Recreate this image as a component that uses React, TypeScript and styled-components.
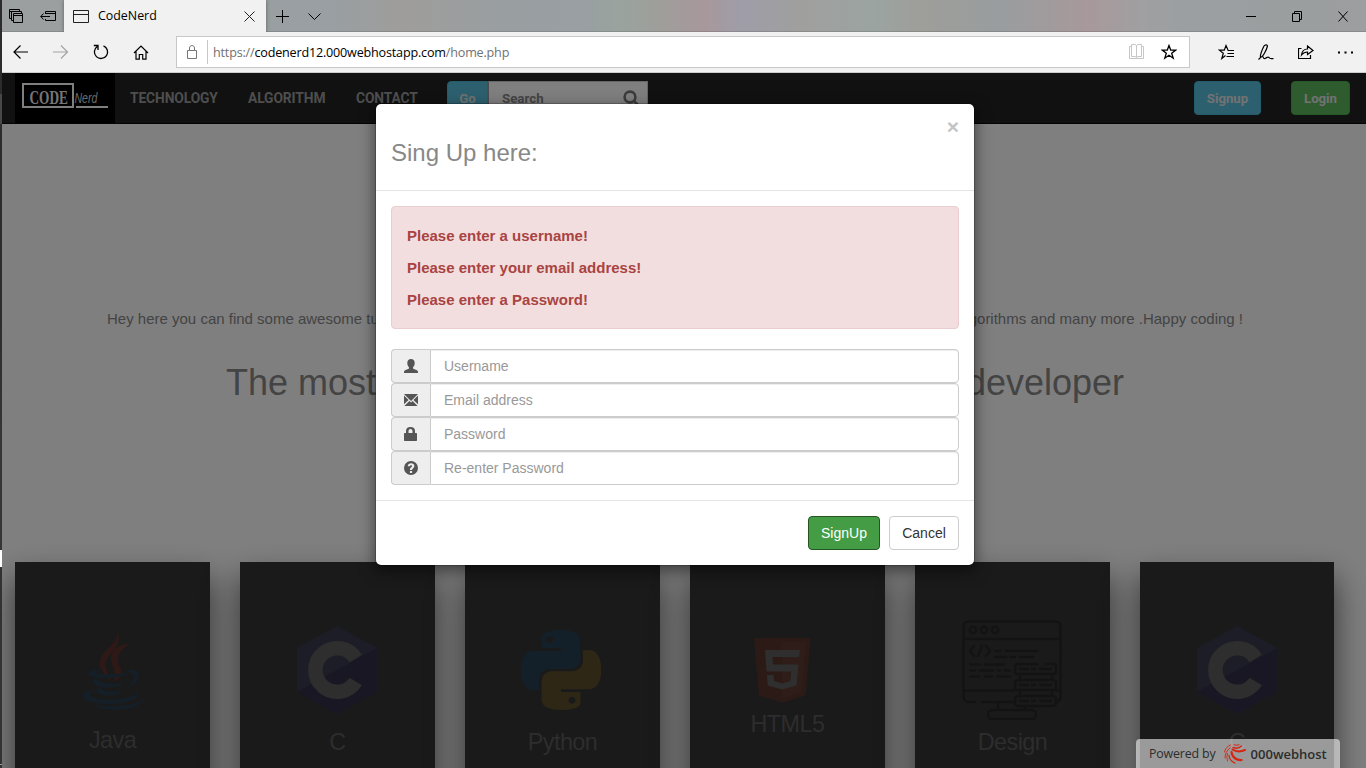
import React from "react";
import styled, { createGlobalStyle } from "styled-components";

const GlobalStyle = createGlobalStyle`
  * { box-sizing: border-box; }
  html, body { margin: 0; padding: 0; overflow: hidden; background: #fff; }
  body { font-family: "Liberation Sans", Arial, sans-serif; font-size: 14px; }
  svg { display: block; flex: none; }
`;

/* ---------- window ---------- */
const Screen = styled.div`
  display: flex;
  width: 1366px;
  height: 768px;
  overflow: hidden;
`;
const DesktopEdge = styled.div`
  width: 2px;
  flex: none;
  background: linear-gradient(
    #2c2c2c 0 94px, #484848 94px 124px, #2d2d2d 124px 330px, #353535 430px 550px,
    #fff 550px 567px, #323232 567px 764px, #999 764px 765px, #323232 765px
  );
`;
const BrowserWindow = styled.div`
  flex: 1;
  min-width: 0;
  display: flex;
  flex-direction: column;
`;
const TitleBar = styled.div`
  height: 32px;
  flex: none;
  display: flex;
  align-items: stretch;
  background: linear-gradient(
    to right,
    #9b9fa0 0px, #999fa2 330px, #9f9d9c 400px, #999fa1 500px, #999fa2 583px, #9aa39d 618px,
    #9f9e9b 660px, #a8989c 703px, #9e9da8 740px, #a09f9e 795px, #9ba4a1 870px,
    #9e9e9a 920px, #999d9f 1000px, #a8999b 1085px, #a09fa1 1140px, #9a9fa1 1190px, #9c9e9f 1364px
  );
  box-shadow: inset 0 -1px 0 rgba(0, 0, 0, 0.12);
`;
const Tab = styled.div`
  width: 202px;
  display: flex;
  align-items: center;
  padding: 0 11px 0 9px;
  background: #f1f1f1;
  box-shadow: 0 0 4px rgba(0, 0, 0, 0.4);
  clip-path: inset(0 -5px 0 -5px);
`;
const TabTitle = styled.span`
  flex: 1;
  margin-left: 9px;
  font: 12.4px/16px "Open Sans", sans-serif;
  color: #000;
`;
const TitleTools = styled.div<{ $width: number; $pad: number; $gap: number }>`
  width: ${(p) => p.$width}px;
  padding-left: ${(p) => p.$pad}px;
  display: flex;
  align-items: center;
  gap: ${(p) => p.$gap}px;
`;
const Spacer = styled.div`
  flex: 1;
`;
const ToolBar = styled.div`
  height: 41px;
  flex: none;
  display: flex;
  align-items: center;
  background: #f1f1f1;
  border-bottom: 1px solid #ccc;
`;
const NavTools = styled.div`
  width: 174px;
  padding-left: 11px;
  display: flex;
  align-items: center;
  gap: 24px;
`;
const AddressBar = styled.div`
  width: 1014px;
  height: 32px;
  display: flex;
  align-items: center;
  padding: 0 12px 0 10px;
  background: #fff;
  border: 1px solid #c8c8c8;
`;
const AddressDivider = styled.div`
  width: 1px;
  height: 24px;
  margin: 0 5px 0 10px;
  background: #c8c8c8;
`;
const Url = styled.span`
  flex: 1;
  padding-top: 2px;
  font: 12.6px/18px "Open Sans", sans-serif;
  letter-spacing: -0.19px;
  color: #717171;
  b { font-weight: 400; color: #000; }
`;
const AddressActions = styled.div`
  display: flex;
  gap: 16px;
`;
const BrowserTools = styled.div`
  display: flex;
  align-items: center;
  padding-left: 28px;
  gap: 24px;
`;

/* ---------- page ---------- */
const Page = styled.main`
  position: relative;
  flex: 1;
  min-height: 0;
  overflow: hidden;
  background: #fff;
`;
const Navbar = styled.nav`
  height: 51px;
  display: flex;
  align-items: flex-start;
  padding: 0 16px 0 13px;
  background: #222;
  border-bottom: 1px solid #080808;
  font-family: Roboto, sans-serif;
`;
const Brand = styled.div`
  width: 100px;
  height: 50px;
  background: #000;
`;
const NavLink = styled.a<{ $width: number }>`
  width: ${(p) => p.$width}px;
  padding-left: 15px;
  font-size: 13.8px;
  font-weight: 700;
  line-height: 50px;
  letter-spacing: -0.1px;
  white-space: nowrap;
  color: #9d9d9d;
`;
const SearchGroup = styled.div`
  width: 201px;
  height: 34px;
  margin: 8px 0 0 13px;
  display: flex;
`;
const NavButton = styled.button<{ $color: string; $border: string; $width: number }>`
  width: ${(p) => p.$width}px;
  height: 34px;
  margin: 8px 0 0;
  padding: 1px 0 0;
  border: 1px solid ${(p) => p.$border};
  border-radius: 4px;
  background: ${(p) => p.$color};
  color: #e4e4e4;
  font: 700 13.2px/20px Roboto, sans-serif;
  & + & { margin-left: 30px; }
`;
const GoButton = styled(NavButton)`
  margin: 0;
  border-radius: 4px 0 0 4px;
`;
const SearchField = styled.div`
  flex: 1;
  display: flex;
  align-items: center;
  justify-content: space-between;
  padding: 0 7px 0 13px;
  background: #fff;
  border: 1px solid #ccc;
  border-left-color: #999;
  color: #888;
  font-weight: 700;
  font-size: 13.3px;
`;
const Hero = styled.section`
  height: 438px;
  padding-top: 184px;
  color: #888;
`;
const SplitLine = styled.p<{ $size: number; $width: number; $left: number; $top: number }>`
  display: flex;
  justify-content: space-between;
  width: ${(p) => p.$width}px;
  margin: ${(p) => p.$top}px 0 0 ${(p) => p.$left}px;
  font-size: ${(p) => p.$size}px;
  line-height: 1.46;
  white-space: nowrap;
`;
const CardRow = styled.section`
  display: flex;
  gap: 30px;
  padding-left: 13px;
`;
const Card = styled.article`
  width: 195px;
  height: 300px;
  flex: none;
  display: flex;
  flex-direction: column;
  align-items: center;
  padding-top: 58px;
  background: #343434;
  box-shadow: 0 19px 38px rgba(0, 0, 0, 0.32), 0 15px 25px rgba(0, 0, 0, 0.36);
  &:last-child { width: 194px; }
`;
const CardArt = styled.div<{ $height: number; $top: number; $shift: number }>`
  height: ${(p) => p.$height}px;
  padding-top: ${(p) => p.$top}px;
  padding-right: ${(p) => p.$shift}px;
`;
const CardTitle = styled.h3`
  margin: 9px 0 0;
  font-size: 23.4px;
  line-height: 26px;
  font-weight: 400;
  letter-spacing: -0.55px;
  color: #5a5a5a;
`;
const Backdrop = styled.div`
  position: absolute;
  inset: 0;
  background: rgba(0, 0, 0, 0.5);
`;

/* ---------- modal ---------- */
const Modal = styled.div`
  position: absolute;
  left: 373px;
  top: 30px;
  width: 600px;
  background: #fff;
  background-clip: padding-box;
  border: 1px solid rgba(0, 0, 0, 0.2);
  border-radius: 6px;
  box-shadow: 0 5px 15px rgba(0, 0, 0, 0.5);
`;
const ModalHeader = styled.header`
  height: 87px;
  display: flex;
  justify-content: space-between;
  padding: 15px 15px 0;
  border-bottom: 1px solid #e5e5e5;
`;
const ModalTitle = styled.h4`
  margin: 18px 0 0;
  font-size: 24px;
  line-height: 32px;
  font-weight: 400;
  color: #888;
`;
const CloseButton = styled.button`
  height: 16px;
  margin-top: 0;
  padding: 0;
  border: 0;
  background: none;
  font: 700 21px/16px "Liberation Sans", Arial, sans-serif;
  color: #c4c4c4;
`;
const ModalBody = styled.div`
  padding: 15px;
`;
const Alert = styled.div`
  height: 123px;
  margin-bottom: 20px;
  padding: 18px 15px 0;
  border: 1px solid #ebccd1;
  border-radius: 4px;
  background: #f2dede;
  color: #a94442;
`;
const AlertLine = styled.p`
  margin: 0 0 10px;
  font-size: 15px;
  line-height: 22px;
  font-weight: 700;
`;
const InputGroup = styled.label`
  display: flex;
  height: 34px;
`;
const Addon = styled.span`
  width: 39px;
  display: flex;
  align-items: center;
  justify-content: center;
  background: #eee;
  border: 1px solid #ccc;
  border-right: 0;
  border-radius: 4px 0 0 4px;
  color: #555;
`;
const Input = styled.input`
  flex: 1;
  min-width: 0;
  height: 34px;
  padding: 6px 13px;
  border: 1px solid #ccc;
  border-radius: 0 4px 4px 0;
  box-shadow: inset 0 1px 1px rgba(0, 0, 0, 0.075);
  font: 14px/20px "Liberation Sans", Arial, sans-serif;
  &::placeholder { color: #999; opacity: 1; }
`;
const ModalFooter = styled.footer`
  display: flex;
  justify-content: flex-end;
  gap: 9px;
  padding: 15px;
  border-top: 1px solid #e5e5e5;
`;
const Button = styled.button<{ $primary?: boolean }>`
  width: ${(p) => (p.$primary ? 72 : 70)}px;
  height: 34px;
  padding: 0;
  border: 1px solid ${(p) => (p.$primary ? "#255625" : "#ccc")};
  border-radius: 4px;
  background: ${(p) => (p.$primary ? "#449d44" : "#fff")};
  color: ${(p) => (p.$primary ? "#fff" : "#333")};
  font: 14px/20px "Liberation Sans", Arial, sans-serif;
`;

/* ---------- hosting badge ---------- */
const HostBadge = styled.aside`
  position: absolute;
  right: 26px;
  bottom: 0;
  width: 204px;
  height: 29px;
  display: flex;
  align-items: center;
  padding-left: 13px;
  background: rgba(255, 255, 255, 0.56);
  border-radius: 4px 4px 0 0;
  font: 12.4px/18px "Open Sans", sans-serif;
  letter-spacing: -0.15px;
  color: #2c2c2c;
  svg { margin: 0 4px 0 7px; }
  strong { font-weight: 600; font-size: 13px; letter-spacing: 0; }
`;

/* ---------- icons ---------- */
type LineProps = { w: number; h: number; color?: string; sw?: number; children: React.ReactNode };
const Line = ({ w, h, color = "#000", sw = 1, children }: LineProps) => (
  <svg width={w} height={h} viewBox={`0 0 ${w} ${h}`} fill="none" stroke={color} strokeWidth={sw}>
    {children}
  </svg>
);

const BrandLogo = () => (
  <svg width="100" height="50" viewBox="0 0 100 50">
    <path d="M8 11H58V34H8Z" fill="none" stroke="#fff" strokeWidth="2" />
    <path d="M61 34H93" stroke="#fff" strokeWidth="2" />
    <text transform="translate(14.500 30.500) scale(0.700 1)" fontFamily="Liberation Serif, serif"
      fontWeight="700" fontSize="19" fill="#ececec">CODE</text>
    <text transform="translate(59.500 30) scale(0.680 1)" fontFamily="Liberation Sans, sans-serif"
      fontStyle="italic" fontSize="15.500" fill="#d5d5d5">Nerd</text>
  </svg>
);

const JavaArt = () => (
  <svg width="62" height="80" viewBox="0 0 62 80">
    <g fill="#5c322e">
      <path d="M35.300.5C38 14 17 21 17.500 34c.4 7 7 12 12.500 18C27 44 22.500 40 23.500 33 25 24 42 16 35.300.5Z" />
      <path d="M47.500 14C37 14 29 20 29 27c0 9 6 14 3 25 8-4 9-9 6.500-14C35 30 33 24 47.500 14Z" />
    </g>
    <g fill="#2a3e50" stroke="#2a3e50" strokeWidth="0.900">
      <path d="M19 40C2 41 2 47 20 47.500c12 .4 21-1 26-4.500-8 1.500-18 2-26 1.500-8-.5-9-2.500-1-4.500Z" />
      <path d="M14 49c-6 4 0 8 11 8 7 0 13-1 16-4-8 2.500-22 2-27-4Z" />
      <path d="M17 58c-6 3 0 7 9 7 6 0 11-1 14-4-8 2-19 1.500-23-3Z" />
      <path d="M48 40c10-1 13 10-2 17 8-7 9-13 0-15.500Z" />
      <path d="M11 61c-15 1-14 10 6 12 17 1.500 40-1 38-10-3 6-24 8-38 6.500C7 68 5 64 11 61Z" />
      <path d="M12 76c12 5 45 5 48.500-6C52 77 30 78 12 76Z" />
    </g>
  </svg>
);
const CArt = () => (
  <svg width="80" height="88" viewBox="0 0 80 88">
    <path d="M40 0 80 22V66L40 88 0 66V22Z" fill="#393b4d" />
    <path d="M80 22V66L40 88 0 66Z" fill="#312f46" />
    <path d="M58.700 32.500A21.800 21.800 0 1 0 58.700 55.500" fill="none" stroke="#5c5c5c" strokeWidth="14.500" />
  </svg>
);
const PythonArt = () => (
  <svg width="80" height="80" viewBox="0 0 24 24">
    <path fill="#284152" d="M14.25.18l.9.2.73.26.59.3.45.32.34.34.25.34.16.33.1.3.04.26.02.2-.01.13V8.5l-.05.63-.13.55-.21.46-.26.38-.3.31-.33.25-.35.19-.35.14-.33.1-.3.07-.26.04-.21.02H8.77l-.69.05-.59.14-.5.22-.41.27-.33.32-.27.35-.2.36-.15.37-.1.35-.07.32-.04.27-.02.21v3.06H3.17l-.21-.03-.28-.07-.32-.12-.35-.18-.36-.26-.36-.36-.35-.46-.32-.59-.28-.73-.21-.88-.14-1.05-.05-1.23.06-1.22.16-1.04.24-.87.32-.71.36-.57.4-.44.42-.33.42-.24.4-.16.36-.1.32-.05.24-.01h.16l.06.01h8.16v-.83H6.18l-.01-2.75-.02-.37.05-.34.11-.31.17-.28.25-.26.31-.23.38-.2.44-.18.51-.15.58-.12.64-.1.71-.06.77-.04.84-.02 1.27.05zm-6.3 1.98l-.23.33-.08.41.08.41.23.34.33.22.41.09.41-.09.33-.22.23-.34.08-.41-.08-.41-.23-.33-.33-.22-.41-.09-.41.09z" />
    <path fill="#5c4f2d" d="M21.04 6.11l.28.06.32.12.35.18.36.27.36.35.35.47.32.59.28.73.21.88.14 1.04.05 1.23-.06 1.23-.16 1.04-.24.86-.32.71-.36.57-.4.45-.42.33-.42.24-.4.16-.36.09-.32.05-.24.02-.16-.01h-8.22v.82h5.840l.01 2.760.02.36-.05.34-.11.31-.17.29-.25.25-.31.24-.38.2-.44.17-.51.15-.58.13-.64.09-.71.07-.77.04-.84.01-1.270-.04-1.070-.14-.9-.2-.73-.25-.59-.3-.45-.33-.34-.34-.25-.34-.16-.33-.1-.3-.04-.25-.02-.2.01-.13v-5.340l.05-.64.13-.54.21-.46.26-.38.3-.32.33-.24.35-.2.35-.14.33-.1.3-.06.26-.04.21-.02.13-.01h5.840l.69-.05.59-.14.5-.21.41-.28.33-.32.27-.35.2-.36.15-.36.1-.35.07-.32.04-.28.02-.21V6.070h2.090zm-6.470 14.250l-.23.33-.08.41.08.41.23.33.33.23.41.08.41-.08.33-.23.23-.33.08-.41-.08-.41-.23-.33-.33-.23-.41-.08-.41.08z" />
  </svg>
);
const HtmlArt = () => (
  <svg width="57" height="65" viewBox="0 0 57 65">
    <path d="M0 0H56.500L51.500 57.500 28.300 64.500 5 57.500Z" fill="#59352d" />
    <path d="M28.300 4H52L47.500 54.500 28.300 60Z" fill="#5d3a30" />
    <path d="M11 12H46L45 19H18.500L19 26.500H44.500L42.500 47.500 28.300 51.500 13.800 47.500 13 37H19.500L20 43 28.200 45.500 36.500 43 37.200 33.500H12.500Z" fill="#5e5e5e" />
  </svg>
);
const DesignArt = () => (
  <svg width="100" height="100" viewBox="0 0 100 100" fill="none" stroke="#272727" strokeWidth="2.500" strokeLinecap="round">
    <path d="M13 82H7Q1.500 82 1.500 76V7Q1.500 1.500 7 1.500H93Q98.500 1.500 98.500 7V76Q98.500 82 94 82M20 82H52M2 19H98M2 70.500H52M94 70.500H98M36 83V89M63 87V89" />
    <circle cx="11" cy="10" r="3.200" /><circle cx="22" cy="10" r="3.200" /><circle cx="33" cy="10" r="3.200" />
    <path d="M12 26 8 31 12 36M24 26 28 31 24 36M20 26 16 36" />
    <path d="M33 31H38M44 31H75M33 37H44M49 37H53M58 37H71M8 44.500H18M23 44.500H42M8 50.500H13M18 50.500H31M36 50.500H38M43 50.500H48M8 56.500H17M23 56.500H30M35 56.500H48" />
    <path d="M75 44H56Q53 44 53 47V51Q53 54 56 54H91Q94 54 94 51V47Q94 44 91 44H84" />
    <rect x="53" y="60" width="41" height="10" rx="3" /><rect x="53" y="76" width="41" height="10" rx="3" />
    <path d="M58 55V59M90 55V59M58 71V75M90 71V75M58 49H66M70 49H73M78 49H89M58 65H66M70 65H73M78 65H89M58 81H66M70 81H73M78 81H89" />
    <rect x="26" y="90" width="48" height="9" rx="4" />
  </svg>
);
const HostMark = () => (
  <svg width="24" height="20" viewBox="0 0 24 20" fill="none" stroke="#d9230f" strokeLinecap="round">
    <path d="M9.500 5.500Q15 9 22 6" strokeWidth="2" />
    <path d="M8.500 8C9 13.500 14 16.500 18.500 16" strokeWidth="2.200" />
    <path d="M6 11.500Q6.500 17 12 19" strokeWidth="1.300" />
    <path d="M10 3.500Q15 5.500 18.500 2" strokeWidth="1.500" />
    <path d="M7.500 1Q2.500 3 1.500 8" strokeWidth="0.900" />
    <path d="M7 4Q2 7.500 2 14" strokeWidth="0.900" />
    <path d="M11 .8Q14 2 16 .8" strokeWidth="1" />
    <path d="M4.500 9.500Q3 13 4.500 17" strokeWidth="0.900" />
  </svg>
);

const fieldIcons = {
  user: <path d="M7 0C9.200 0 10.700 1.500 10.700 4 10.700 6 9.900 7.300 9 8.400V9.600C11 10.600 13 11.200 13.700 12 14 12.500 14 13 14 14H0C0 13 0 12.500.3 12 1 11.200 3 10.600 5 9.600V8.400C4.100 7.300 3.300 6 3.300 4 3.300 1.500 4.800 0 7 0Z" />,
  mail: <path d="M0 1H14L7 8ZM0 2.500 4.600 7 0 11.300ZM14 2.500V11.300L9.400 7ZM5.400 7.900 7 9.400 8.600 7.900 13.600 13H.4Z" />,
  lock: <path d="M2 6V4C2 1.500 3.500 0 6.500 0S11 1.500 11 4V6H12.300Q13 6 13 6.700V13.300Q13 14 12.300 14H.7Q0 14 0 13.300V6.700Q0 6 .7 6ZM4.500 6H8.500V4Q8.500 2 6.500 2T4.500 4Z" />,
  question: <path d="M7 0a7 7 0 1 1 0 14A7 7 0 0 1 7 0ZM5.900 9.900V12H8.100V9.900ZM3.700 5.300H5.900C5.900 3.800 8.100 3.800 8.100 5 8.100 6.200 5.900 6.300 5.900 9H8.100C8.100 7.500 10.400 7 10.400 5 10.400 1.200 3.700 1.200 3.700 5.300Z" />,
};
const FieldIcon = ({ name }: { name: keyof typeof fieldIcons }) => (
  <svg width="14" height="14" viewBox="0 0 14 14" fill="currentColor" fillRule="evenodd">{fieldIcons[name]}</svg>
);

const fields: { icon: keyof typeof fieldIcons; label: string; type: string }[] = [
  { icon: "user", label: "Username", type: "text" },
  { icon: "mail", label: "Email address", type: "email" },
  { icon: "lock", label: "Password", type: "password" },
  { icon: "question", label: "Re-enter Password", type: "password" },
];
const cards = [
  { title: "Java", art: <JavaArt />, height: 98, top: 10, shift: 0 },
  { title: "C", art: <CArt />, height: 100, top: 6, shift: 1 },
  { title: "Python", art: <PythonArt />, height: 100, top: 10, shift: 3 },
  { title: "HTML5", art: <HtmlArt />, height: 82, top: 18, shift: 11 },
  { title: "Design", art: <DesignArt />, height: 100, top: 0, shift: 1 },
  { title: "C", art: <CArt />, height: 100, top: 6, shift: 0 },
];

const Chrome = () => (
  <>
    <TitleBar>
      <TitleTools $width={62} $pad={7} $gap={17}>
        <Line w={14} h={14}><path d="M2.500 9.500H.5V.5H10.500V2.500M.5 2.500H10M4.500 11.500H2.500V2.500H12.500V4.500M4.500 4.500H13.500V13.500H4.500ZM4.500 6.500H13.500" /></Line>
        <Line w={16} h={12}><path d="M5.500 4V1.500H15.500V10.500H5.500V9M5.500 3.500H15.500M.8 6.500H10M3.500 3.500.8 6.500 3.500 9.500" /></Line>
      </TitleTools>
      <Tab>
        <Line w={16} h={13} color="#222"><path d="M.5.5H15.500V12.500H.5ZM.5 4.500H15.500" /></Line>
        <TabTitle>CodeNerd</TabTitle>
        <Line w={11} h={11} color="#222"><path d="M.5.5 10.500 10.500M10.500.5.5 10.500" /></Line>
      </Tab>
      <TitleTools $width={80} $pad={10} $gap={19}>
        <Line w={13} h={13}><path d="M6.500 0V13M0 6.500H13" /></Line>
        <Line w={13} h={7}><path d="M.5.5 6.500 6.500 12.500.5" /></Line>
      </TitleTools>
      <Spacer />
      <TitleTools $width={120} $pad={0} $gap={36}>
        <Line w={10} h={11}><path d="M0 5.500H10" /></Line>
        <Line w={10} h={11}><path d="M.5 2.500H7.500V10.500H.5ZM2.500 2.500V.5H9.500V8.500H7.500" /></Line>
        <Line w={10} h={11}><path d="M.5.5 9.500 10.500M9.500.5.5 10.500" /></Line>
      </TitleTools>
    </TitleBar>
    <ToolBar>
      <NavTools>
        <Line w={16} h={14} sw={1.200}><path d="M1 7H15M7.500.5 1 7 7.500 13.500" /></Line>
        <Line w={16} h={14} color="#a3a3a3" sw={1.200}><path d="M0 7H14.500M8 .5 14.500 7 8 13.500" /></Line>
        <Line w={16} h={16} sw={1.300}><path d="M10.500 1.800A6.600 6.600 0 1 1 4.200 2.500M5 6V1.500H.8" /></Line>
        <Line w={16} h={15} sw={1.200}><path d="M1 8 8 1 15 8M3 6.500V14.200H6.300V9.500H9.700V14.200H13V6.500" /></Line>
      </NavTools>
      <AddressBar>
        <Line w={10} h={14} color="#777"><path d="M.5 5.500H9.500V13.500H.5ZM2.500 5V3C2.500-.2 7.500-.2 7.500 3V5" /></Line>
        <AddressDivider />
        <Url>https://<b>codenerd12.000webhostapp.com</b>/home.php</Url>
        <AddressActions>
          <Line w={16} h={15} color="#c6c6c6"><path d="M2.500 12.500V.5H6L7.500 1.500 9 .5H12.500V12.500H9L7.500 13.500 6 12.500ZM7.500 1.500V13M2 2.500H.5V14.500H14.500V2.500H13" /></Line>
          <Line w={16} h={16} sw={1.300}><path d="M8 1.500 9.700 6.100H14.700L10.700 9.200 12.200 14.200 8 11.200 3.800 14.200 5.300 9.200 1.300 6.100H6.300Z" /></Line>
        </AddressActions>
      </AddressBar>
      <BrowserTools>
        <Line w={16} h={16} sw={1.200}><path d="M10 6 8 1.500 6.300 6.100H1.300L5.300 9.200 3.800 14.500 7.500 11.500M9.500 6.500H16M9.500 9.500H16M8.500 12.500H16" /></Line>
        <Line w={16} h={16} sw={1.200}><path d="M.5 15.500 2.500 13.500C5 13 8.500 6 9.500 2 9.300.3 7 .5 6 2 4 6 2 11 2.500 13.500M4.500 12C6 14 5 15 7 14.500 9 14 9.500 12 11 13.500 12 15.200 13.500 14.800 15.500 14.500" /></Line>
        <Line w={16} h={14} sw={1.200}><path d="M3.500 3.500H.5V13.500H12.500V10M3.500 10C4 6 6 4 9.500 4V1L15 5.500 9.500 9.500V7C7 7 5 8 3.500 10Z" /></Line>
        <Line w={15} h={3}><path d="M0 1.500H2M6.500 1.500H8.500M13 1.500H15" strokeWidth="2" /></Line>
      </BrowserTools>
    </ToolBar>
  </>
);

const SignUpModal = () => (
  <Modal role="dialog">
    <ModalHeader>
      <ModalTitle>Sing Up here:</ModalTitle>
      <CloseButton aria-label="Close">×</CloseButton>
    </ModalHeader>
    <ModalBody>
      <Alert>
        <AlertLine>Please enter a username!</AlertLine>
        <AlertLine>Please enter your email address!</AlertLine>
        <AlertLine>Please enter a Password!</AlertLine>
      </Alert>
      {fields.map((f) => (
        <InputGroup key={f.label}>
          <Addon><FieldIcon name={f.icon} /></Addon>
          <Input type={f.type} placeholder={f.label} />
        </InputGroup>
      ))}
    </ModalBody>
    <ModalFooter>
      <Button $primary>SignUp</Button>
      <Button>Cancel</Button>
    </ModalFooter>
  </Modal>
);

export default function App() {
  return (
    <Screen>
      <GlobalStyle />
      <DesktopEdge />
      <BrowserWindow>
        <Chrome />
        <Page>
          <Navbar>
            <Brand><BrandLogo /></Brand>
            <NavLink $width={118}>TECHNOLOGY</NavLink>
            <NavLink $width={108}>ALGORITHM</NavLink>
            <NavLink $width={93}>CONTACT</NavLink>
            <SearchGroup>
              <GoButton $width={41} $color="#5bc0de" $border="#46b8da">Go</GoButton>
              <SearchField>
                Search
                <Line w={17} h={17} color="#777" sw={2.600}><circle cx="7" cy="7" r="5.400" /><path d="M10.800 10.800 16 16" /></Line>
              </SearchField>
            </SearchGroup>
            <Spacer />
            <NavButton $width={67} $color="#5bc0de" $border="#46b8da">Signup</NavButton>
            <NavButton $width={59} $color="#5cb85c" $border="#4cae4c">Login</NavButton>
          </Navbar>
          <Hero>
            <SplitLine $size={15} $width={1136} $left={105} $top={0}>
              <span>Hey here you can find some awesome tutorials</span>
              <span>algorithms and many more .Happy coding !</span>
            </SplitLine>
            <SplitLine $size={36} $width={898} $left={224} $top={27}>
              <span>The most</span>
              <span>developer</span>
            </SplitLine>
          </Hero>
          <CardRow>
            {cards.map((c, i) => (
              <Card key={i}>
                <CardArt $height={c.height} $top={c.top} $shift={c.shift}>{c.art}</CardArt>
                <CardTitle>{c.title}</CardTitle>
              </Card>
            ))}
          </CardRow>
          <Backdrop />
          <SignUpModal />
          <HostBadge>
            Powered by <HostMark /> <strong>000webhost</strong>
          </HostBadge>
        </Page>
      </BrowserWindow>
    </Screen>
  );
}
